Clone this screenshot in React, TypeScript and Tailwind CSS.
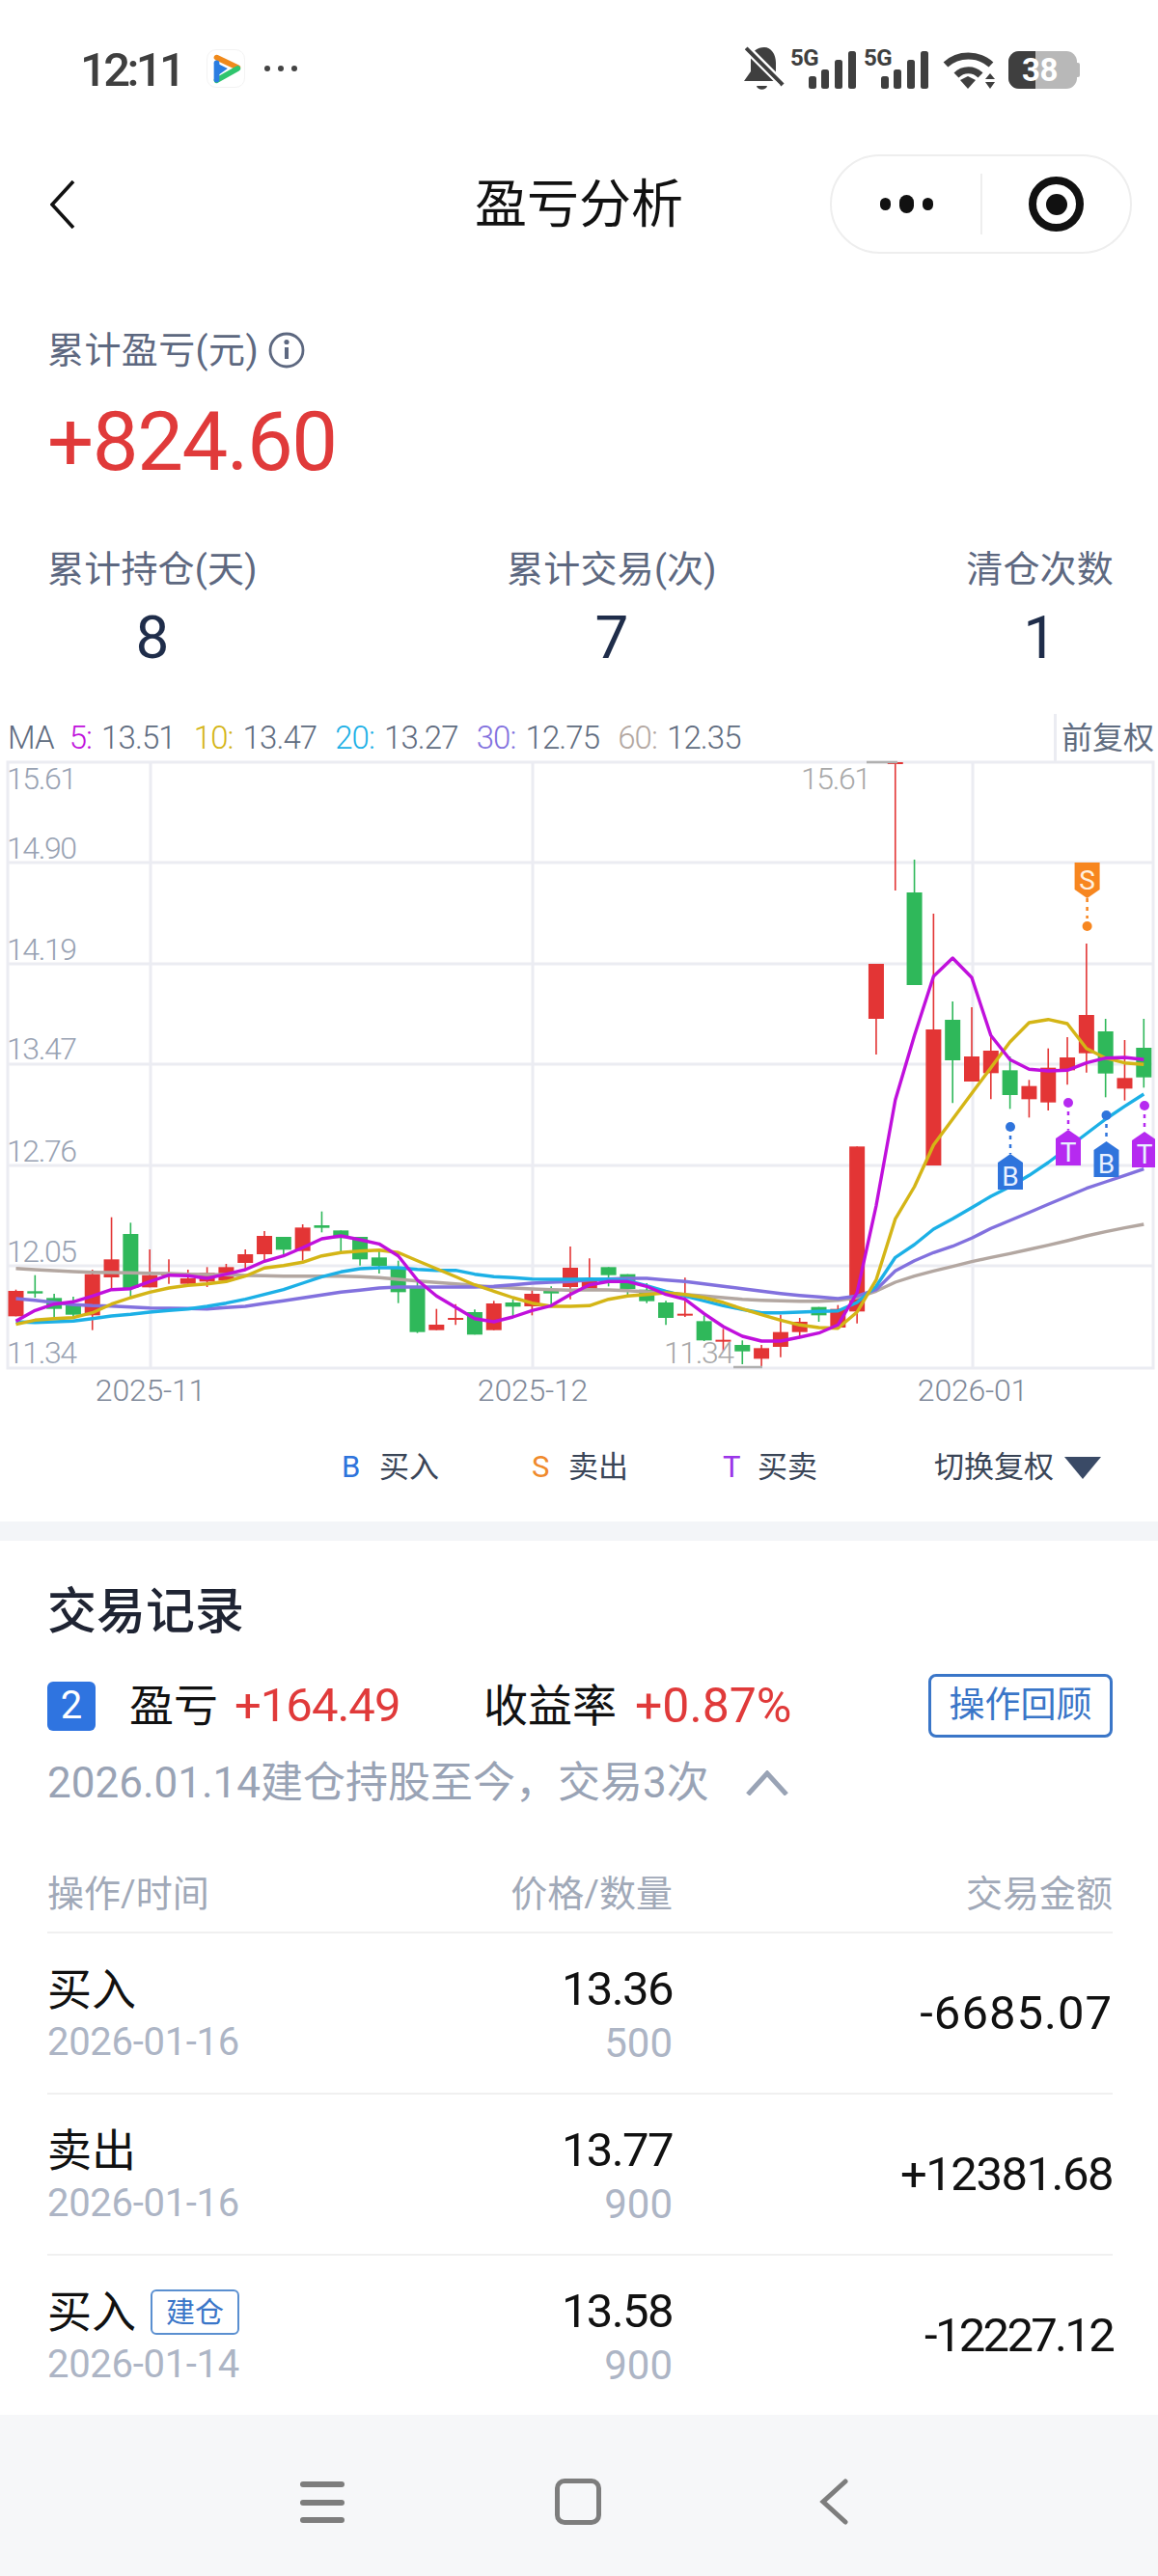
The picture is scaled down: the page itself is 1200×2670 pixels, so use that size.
const z = (v: number) => 1080 + v / 3;
const cx = (i: number) => 16.5 + i * 19.81;

// [up, high, top, bottom, low], y values measured against the lower chart crop
const candles: [number, number, number, number, number][] = [
  [1, 770, 774, 853, 853], [0, 725, 775, 782, 795], [0, 783, 796, 830, 858], [0, 792, 813, 848, 855],
  [1, 708, 722, 850, 896], [1, 545, 676, 732, 770], [0, 562, 597, 765, 798], [1, 645, 725, 763, 763],
  [1, 676, 720, 726, 752], [1, 708, 735, 752, 752], [1, 700, 718, 745, 762], [1, 690, 700, 742, 742],
  [1, 645, 660, 687, 705], [1, 588, 603, 660, 680], [0, 606, 606, 646, 662], [1, 567, 577, 650, 680],
  [0, 527, 570, 578, 592], [0, 586, 586, 610, 652], [0, 606, 606, 676, 695], [0, 650, 670, 696, 720],
  [0, 680, 700, 778, 812], [0, 745, 765, 902, 905], [1, 830, 879, 896, 896], [1, 815, 858, 861, 880],
  [0, 832, 840, 910, 910], [1, 805, 813, 896, 896], [0, 800, 810, 823, 852], [1, 772, 783, 822, 850],
  [0, 760, 773, 782, 820], [1, 636, 702, 762, 800], [1, 673, 735, 770, 770], [0, 700, 700, 725, 760],
  [0, 722, 722, 768, 790], [0, 750, 770, 806, 812], [0, 805, 810, 858, 880], [1, 733, 845, 850, 855],
  [0, 850, 868, 928, 930], [1, 892, 926, 932, 960], [0, 928, 942, 962, 1002], [1, 942, 952, 985, 1010],
  [1, 848, 902, 948, 980], [1, 858, 870, 902, 918], [0, 824, 824, 850, 870], [1, 818, 830, 888, 888],
  [1, 325, 325, 838, 875], [1, -243, -243, -72, 39], [1, -870, -870, -868, -471], [0, -567, -465, -177, -177],
  [1, -399, -39, 384, 384], [0, -126, -69, 57, 190], [1, -108, 45, 123, 123], [1, -15, 27, 97, 178],
  [0, 45, 88, 165, 208], [1, 118, 137, 178, 235], [1, 20, 80, 188, 213], [1, -15, 48, 88, 133],
  [1, -306, -84, 35, 95], [0, -72, -33, 98, 172], [1, -6, 112, 145, 182], [0, -72, 18, 110, 142],
];

const ma60 = [704, 708, 711, 714, 716, 717, 718, 719, 720, 722, 723, 724, 726, 727, 728, 728, 728, 728, 730, 733, 738, 743, 748, 752, 757, 762, 765, 768, 770, 772, 770, 771, 773, 777, 780, 785, 790, 795, 800, 803, 805, 806, 806, 803, 795, 775, 747, 728, 712, 698, 683, 670, 658, 645, 632, 618, 603, 590, 578, 567];
const ma30 = [798, 803, 810, 817, 820, 821, 824, 827, 828, 829, 830, 826, 822, 813, 805, 796, 787, 778, 772, 765, 762, 762, 762, 762, 762, 760, 755, 750, 747, 745, 740, 737, 735, 735, 740, 745, 752, 760, 767, 775, 782, 788, 793, 798, 790, 770, 712, 680, 655, 635, 610, 580, 555, 530, 505, 480, 455, 435, 415, 395];
const ma20 = [870, 872, 870, 868, 860, 852, 847, 840, 835, 830, 822, 812, 800, 785, 770, 750, 730, 715, 705, 702, 702, 707, 710, 710, 722, 730, 733, 737, 738, 738, 737, 738, 742, 758, 775, 790, 805, 820, 832, 842, 842, 840, 838, 836, 810, 760, 670, 630, 582, 550, 515, 480, 450, 415, 375, 330, 285, 240, 200, 162];
const ma10 = [878, 865, 860, 857, 842, 815, 795, 778, 765, 757, 752, 745, 728, 703, 695, 685, 665, 655, 650, 647, 655, 680, 705, 730, 755, 775, 795, 812, 822, 822, 820, 800, 790, 785, 780, 785, 795, 810, 830, 848, 865, 880, 888, 890, 840, 740, 550, 450, 320, 240, 160, 80, 0, -60, -70, -57, 20, 50, 65, 70];
const ma5 = [868, 835, 815, 808, 790, 770, 767, 745, 725, 727, 735, 722, 708, 682, 665, 640, 612, 603, 615, 628, 665, 740, 790, 825, 860, 870, 855, 835, 820, 785, 755, 745, 745, 760, 785, 800, 845, 885, 915, 930, 930, 918, 905, 880, 780, 510, 180, -20, -204, -261, -200, -20, 55, 85, 90, 88, 65, 50, 48, 55];

const pts = (a: number[]) => a.map((v, i) => `${cx(i).toFixed(1)},${z(v).toFixed(1)}`).join(" ");

function Tag({ x, tip, dot, label, color }: { x: number; tip: number; dot: number; label: string; color: string }) {
  return (
    <g>
      <circle cx={x} cy={dot} r={5} fill={color} />
      <line x1={x} x2={x} y1={dot + 9} y2={tip} stroke={color} strokeWidth={2.5} strokeDasharray="4 5" />
      <path d={`M${x} ${tip}L${x + 13} ${tip + 9}V${tip + 37}H${x - 13}V${tip + 9}Z`} fill={color} />
      <text x={x} y={tip + 33} textAnchor="middle" fontSize={28} fill="#e8f0ff">{label}</text>
    </g>
  );
}

function Chart() {
  const hLines = [894, 999, 1103, 1208, 1312];
  const vLines = [156, 552, 1008];
  const yLabels: [string, number][] = [["15.61", 818], ["14.90", 890], ["14.19", 995], ["13.47", 1098], ["12.76", 1204], ["12.05", 1308], ["11.34", 1413]];
  const xLabels: [string, number][] = [["2025-11", 156], ["2025-12", 552], ["2026-01", 1008]];
  return (
    <svg viewBox="0 770 1200 694" className="block -mt-[20px] w-[1200px] h-[694px]" fontFamily="Roboto, 'Noto Sans CJK SC', sans-serif">
      <rect x={8} y={790} width={1187} height={628} fill="none" stroke="#ebecf2" strokeWidth={3} />
      {hLines.map((y) => <line key={y} x1={8} x2={1195} y1={y} y2={y} stroke="#ebecf2" strokeWidth={3} />)}
      {vLines.map((x) => <line key={x} x1={x} x2={x} y1={790} y2={1418} stroke="#ebecf2" strokeWidth={3} />)}
      {yLabels.map(([t, y]) => <text key={t} x={7} y={y} fontSize={32} fontWeight={300} fill="#98a2b3" letterSpacing={-1.4}>{t}</text>)}
      {xLabels.map(([t, x]) => <text key={t} x={x} y={1452} fontSize={32} fontWeight={300} textAnchor="middle" fill="#7f8999" letterSpacing={-0.2}>{t}</text>)}

      {candles.map(([up, high, top, bottom, low], i) => {
        const c = up ? "#e33535" : "#2fb85a";
        const h = Math.max((bottom - top) / 3, 2);
        return (
          <g key={i}>
            <line x1={cx(i)} x2={cx(i)} y1={z(high)} y2={z(low)} stroke={c} strokeWidth={1.6} />
            <rect x={cx(i) - 8} y={z(top)} width={16} height={h} fill={c} />
          </g>
        );
      })}

      <polyline points={pts(ma60)} fill="none" stroke="#b3a7a1" strokeWidth={3.4} strokeLinejoin="round" />
      <polyline points={pts(ma30)} fill="none" stroke="#8271de" strokeWidth={3.4} strokeLinejoin="round" />
      <polyline points={pts(ma20)} fill="none" stroke="#1cb0e6" strokeWidth={3.4} strokeLinejoin="round" />
      <polyline points={pts(ma10)} fill="none" stroke="#d4b516" strokeWidth={3.4} strokeLinejoin="round" />
      <polyline points={pts(ma5)} fill="none" stroke="#c010dc" strokeWidth={3.4} strokeLinejoin="round" />

      <text x={830} y={818} fontSize={32} fontWeight={300} fill="#a8a8a8" letterSpacing={-1.4}>15.61</text>
      <line x1={898} x2={930} y1={790} y2={790} stroke="#b0b0b0" strokeWidth={2.5} />
      <text x={688} y={1413} fontSize={32} fontWeight={300} fill="#a8a8a8" letterSpacing={-1.4}>11.34</text>
      <line x1={760} x2={790} y1={1417} y2={1417} stroke="#b0b0b0" strokeWidth={2.5} />

      {/* S marker points down, the rest point up */}
      <circle cx={1126.6} cy={960} r={5} fill="#f7861f" />
      <line x1={1126.6} x2={1126.6} y1={931} y2={952} stroke="#f7861f" strokeWidth={2.5} strokeDasharray="4 5" />
      <path d="M1113.6 894H1139.6V922L1126.6 931L1113.6 922Z" fill="#f7861f" />
      <text x={1126.6} y={922} textAnchor="middle" fontSize={28} fill="#fff1e0">S</text>

      <Tag x={1047} tip={1196} dot={1168} label="B" color="#2f74dc" />
      <Tag x={1107} tip={1171} dot={1143} label="T" color="#b62af0" />
      <Tag x={1146.5} tip={1183} dot={1156} label="B" color="#2f74dc" />
      <Tag x={1186} tip={1173} dot={1146} label="T" color="#b62af0" />
      <rect x={1197} y={1100} width={3} height={140} fill="#fff" />
    </svg>
  );
}

function Bars() {
  return (
    <svg viewBox="0 0 49 39" className="w-[49px] h-[39px]" fill="#3f3f3f">
      <rect x={0} y={26} width={8} height={13} rx={2.5} />
      <rect x={13} y={19} width={8} height={20} rx={2.5} />
      <rect x={27} y={9} width={8} height={30} rx={2.5} />
      <rect x={41} y={0} width={8} height={39} rx={2.5} />
    </svg>
  );
}

function StatusBar() {
  return (
    <div className="h-[130px] flex justify-between items-start pl-[83px] pr-[81px] pt-[48px]">
      <div className="flex items-center h-[45px]">
        <span className="mt-[3px] text-[49px] leading-none font-medium text-[#3f3f3f] tracking-[-3.6px]">12:11</span>
        <div className="ml-[25px] w-[40px] h-[40px] rounded-[10px] border border-[#f3f3f3]">
          <svg viewBox="0 0 40 40" className="w-[38px] h-[38px]" fill="none" strokeWidth={6} strokeLinecap="round">
            <path d="M10 8L33 19" stroke="#f08a1c" />
            <path d="M10 33L33 20" stroke="#2fc56e" />
            <path d="M10 14V32" stroke="#2a7de1" />
            <path d="M12 15L22 20L12 27Z" fill="#2a7de1" stroke="none" />
          </svg>
        </div>
        <div className="ml-[20px] flex gap-[8px]">
          <span className="w-[6px] h-[6px] rounded-full bg-[#444444]" />
          <span className="w-[6px] h-[6px] rounded-full bg-[#444444]" />
          <span className="w-[6px] h-[6px] rounded-full bg-[#444444]" />
        </div>
      </div>
      <div className="flex items-start">
        <svg viewBox="0 0 42 45" className="w-[42px] h-[45px]" fill="#3f3f3f">
          <path d="M7 12C8 5 14 1 21 1C28 1 33 8 33 17V27L38 36H0L7 26Z" />
          <path d="M13 41H24C23 46 14 46 13 41Z" />
          <path d="M4 1L42 39" stroke="#fff" strokeWidth={5} />
          <path d="M2 2L40 40" stroke="#3f3f3f" strokeWidth={4.5} />
          <path d="M-1 3L37 41" stroke="#fff" strokeWidth={2} />
        </svg>
        <div className="relative ml-[6px] w-[68px] h-[45px]">
          <span className="absolute left-0 -top-[6px] text-[24px] font-bold text-[#3f3f3f] tracking-[-0.6px]">5G</span>
          <div className="absolute right-0 top-[5px]"><Bars /></div>
        </div>
        <div className="relative ml-[8px] w-[67px] h-[45px]">
          <span className="absolute left-0 -top-[6px] text-[24px] font-bold text-[#3f3f3f] tracking-[-0.6px]">5G</span>
          <div className="absolute right-0 top-[5px]"><Bars /></div>
        </div>
        <svg viewBox="0 0 55 39" className="ml-[15px] mt-[5px] w-[55px] h-[39px]" fill="#3f3f3f">
          <path d="M3 14C16 2 37 2 50 14" fill="none" stroke="#3f3f3f" strokeWidth={7} />
          <path d="M14 25C21 18 32 18 39 25" fill="none" stroke="#3f3f3f" strokeWidth={7} />
          <path d="M18 30L26 26L34 30L26 39Z" />
          <path d="M49 23L54 29H44Z" />
          <path d="M44 32H54L49 39Z" />
        </svg>
        <div className="relative ml-[13px] mt-[5px] w-[74px] h-[39px]">
          <div className="absolute left-0 top-0 w-[71px] h-[39px] rounded-[11px] bg-[#b8b8b8] overflow-hidden">
            <div className="w-[28px] h-full bg-[#3f3f3f]" />
          </div>
          <div className="absolute right-0 top-[12px] w-[3px] h-[15px] rounded-r-[2px] bg-[#b8b8b8]" />
          <span className="absolute left-[14px] top-[1px] text-[33px] leading-[37px] font-bold text-white tracking-[-0.5px]">38</span>
        </div>
      </div>
    </div>
  );
}

function NavBar() {
  return (
    <div className="h-[165px] relative flex items-center justify-center">
      <svg viewBox="0 0 26 50" className="absolute left-[52px] top-[57px] w-[26px] h-[50px]" fill="none" stroke="#111" strokeWidth={3.6}>
        <path d="M24 1L2 25L24 49" />
      </svg>
      <span className="text-[54px] leading-none text-[#111]">盈亏分析</span>
      <div className="absolute left-[860px] top-[30px] w-[313px] h-[103px] rounded-full border-2 border-[#eeeeee] flex items-center">
        <div className="w-[154px] flex items-center justify-center gap-[9px]">
          <span className="w-[11px] h-[13px] rounded-full bg-[#111]" />
          <span className="w-[15px] h-[19px] rounded-full bg-[#111]" />
          <span className="w-[11px] h-[13px] rounded-full bg-[#111]" />
        </div>
        <div className="w-[2px] h-[63px] bg-[#eeeeee]" />
        <div className="flex-1 flex justify-center">
          <div className="w-[57px] h-[57px] rounded-full border-[8px] border-[#111] flex items-center justify-center">
            <span className="w-[22px] h-[22px] rounded-full bg-[#111]" />
          </div>
        </div>
      </div>
    </div>
  );
}

function Summary() {
  const stats = [
    { label: "累计持仓(天)", value: "8" },
    { label: "累计交易(次)", value: "7" },
    { label: "清仓次数", value: "1" },
  ];
  return (
    <div className="px-[49px] pr-[46px]">
      <div className="mt-[43px] h-[50px] flex items-center text-[38px] tracking-[0.4px] text-[#5d6880]">
        累计盈亏(元)
        <svg viewBox="0 0 38 38" className="ml-[10px] w-[38px] h-[38px]" fill="none" stroke="#5d6880" strokeWidth={2.8}>
          <circle cx={19} cy={19} r={17} />
          <path d="M19 16V28" strokeWidth={4} />
          <circle cx={19} cy={10.5} r={2.6} fill="#5d6880" stroke="none" />
        </svg>
      </div>
      <div className="mt-[25px] h-[90px] flex items-center text-[85px] leading-none font-normal text-[#e03a3a] tracking-[-1.4px]">+824.60</div>
      <div className="mt-[62px] flex justify-between">
        {stats.map((s) => (
          <div key={s.label} className="flex flex-col items-center">
            <div className="h-[50px] flex items-center text-[38px] tracking-[0.2px] text-[#5d6880]">{s.label}</div>
            <div className="mt-[16px] h-[60px] flex items-center text-[62px] leading-none text-[#1f2d4a]">{s.value}</div>
          </div>
        ))}
      </div>
    </div>
  );
}

function MaRow() {
  const items = [
    { k: "5:", v: "13.51", c: "text-[#c010dc]" },
    { k: "10:", v: "13.47", c: "text-[#d4b516]" },
    { k: "20:", v: "13.27", c: "text-[#1cb0e6]" },
    { k: "30:", v: "12.75", c: "text-[#8271de]" },
    { k: "60:", v: "12.35", c: "text-[#b3a7a1]" },
  ];
  return (
    <div className="mt-[49px] h-[50px] flex items-center pl-[8px] text-[33px] font-light text-[#5f6c80] tracking-[-0.9px]">
      <span>MA</span>
      <div className="ml-[16px] flex gap-[19px]">
        {items.map((m) => (
          <span key={m.k} className="flex gap-[10px]">
            <span className={m.c}>{m.k}</span>
            <span>{m.v}</span>
          </span>
        ))}
      </div>
      <div className="ml-auto w-[108px] h-full border-l-[3px] border-[#ebecf2] pl-[5px] flex items-center text-[32px] font-normal tracking-normal">前复权</div>
    </div>
  );
}

function Legend() {
  return (
    <div className="relative mt-[32px] h-[50px] flex items-center text-[31px] text-[#3a4557] pl-[354px]">
      <span className="text-[#2f74dc] w-[39px]">B</span>
      <span className="w-[158px]">买入</span>
      <span className="text-[#f08a2c] w-[38px]">S</span>
      <span className="w-[160px]">卖出</span>
      <span className="text-[#9a35e8] w-[36px]">T</span>
      <span className="w-[183px]">买卖</span>
      <span>切换复权</span>
      <svg viewBox="0 0 40 25" className="ml-[10px] w-[40px] h-[25px]" fill="#3a4a66">
        <path d="M1 1H39L20 24Z" />
      </svg>
    </div>
  );
}

const rows = [
  { op: "买入", date: "2026-01-16", price: "13.36", qty: "500", amount: "-6685.07", amt: "tracking-[1px]", tag: false },
  { op: "卖出", date: "2026-01-16", price: "13.77", qty: "900", amount: "+12381.68", amt: "tracking-[-1.5px]", tag: false },
  { op: "买入", date: "2026-01-14", price: "13.58", qty: "900", amount: "-12227.12", amt: "tracking-[-2.7px]", tag: true },
];

function Records() {
  return (
    <div className="px-[49px] pr-[47px] bg-white">
      <div className="pt-[44px] h-[102px] flex items-center text-[51px] leading-none font-medium text-[#1f2433]">交易记录</div>
      <div className="mt-[36px] h-[66px] flex items-center text-[46px]">
        <span className="w-[50px] h-[51px] rounded-[6px] bg-[#2f74e0] text-white text-[40px] flex items-center justify-center">2</span>
        <span className="ml-[35px] text-[#111]">盈亏</span>
        <span className="ml-[17px] w-[172px] text-[49px] tracking-[-1px] text-[#e03a3a]">+164.49</span>
        <span className="ml-[86px] text-[#111]">收益率</span>
        <span className="ml-[19px] text-[50px] text-[#e03a3a]">+0.87%</span>
        <span className="ml-auto w-[191px] h-[66px] rounded-[8px] border-[3px] border-[#3a76c8] text-[#3a76c8] text-[37px] flex items-center justify-center">操作回顾</span>
      </div>
      <div className="mt-[22px] h-[50px] flex items-center text-[44px] text-[#99a3b5]">
        2026.01.14建仓持股至今，交易3次
        <svg viewBox="0 0 44 26" className="ml-[38px] w-[44px] h-[26px]" fill="none" stroke="#99a3b5" strokeWidth={5}>
          <path d="M2 25L22 3L42 25" />
        </svg>
      </div>
      <div className="mt-[62px] h-[50px] grid grid-cols-[400px_248px_456px] items-center text-[38px] text-[#a1a9b8]">
        <span>操作/时间</span>
        <span className="text-right">价格/数量</span>
        <span className="text-right">交易金额</span>
      </div>
      <div className="mt-[17px]">
        {rows.map((r) => (
          <div key={r.date + r.amount} className="h-[167px] border-t-2 border-[#f0f0f0] grid grid-cols-[400px_248px_456px]">
            <div className="pt-[33px]">
              <div className="h-[50px] flex items-center text-[46px] text-[#111]">
                {r.op}
                {r.tag && (
                  <span className="ml-[15px] w-[92px] h-[47px] rounded-[6px] border-2 border-[#5a8fd0] text-[#3a76c8] text-[30px] flex items-center justify-center">建仓</span>
                )}
              </div>
              <div className="mt-[5px] h-[50px] flex items-center text-[40px] text-[#adb5c5] tracking-[-0.3px]">{r.date}</div>
            </div>
            <div className="pt-[33px] text-right">
              <div className="h-[50px] flex items-center justify-end text-[49px] tracking-[-1.6px] text-[#111]">{r.price}</div>
              <div className="mt-[5px] h-[50px] flex items-center justify-end text-[42px] text-[#adb5c5]">{r.qty}</div>
            </div>
            <div className={`flex items-center justify-end text-[49px] text-[#111] ${r.amt}`}>{r.amount}</div>
          </div>
        ))}
      </div>
    </div>
  );
}

function SystemNav() {
  return (
    <div className="flex-1 bg-[#f6f7f9] flex justify-center pt-[66px] pr-[10px]">
      <div className="mt-[3px] w-[46px] h-[43px] flex flex-col justify-between">
        <span className="h-[6px] rounded-full bg-[#7d7d7d]" />
        <span className="h-[6px] rounded-full bg-[#7d7d7d]" />
        <span className="h-[6px] rounded-full bg-[#7d7d7d]" />
      </div>
      <div className="ml-[218px] w-[48px] h-[48px] rounded-[10px] border-[5px] border-[#7d7d7d]" />
      <svg viewBox="0 0 30 48" className="ml-[226px] w-[30px] h-[48px]" fill="none" stroke="#7d7d7d" strokeWidth={5} strokeLinecap="round">
        <path d="M27 3L4 24L27 45" />
      </svg>
    </div>
  );
}

export default function App() {
  return (
    <div className="w-[1200px] h-[2670px] flex flex-col bg-white overflow-hidden font-['Roboto','Noto_Sans_CJK_SC',sans-serif]">
      <StatusBar />
      <NavBar />
      <Summary />
      <MaRow />
      <Chart />
      <Legend />
      <div className="mt-[31px] h-[20px] bg-[#f3f5f8]" />
      <Records />
      <SystemNav />
    </div>
  );
}
